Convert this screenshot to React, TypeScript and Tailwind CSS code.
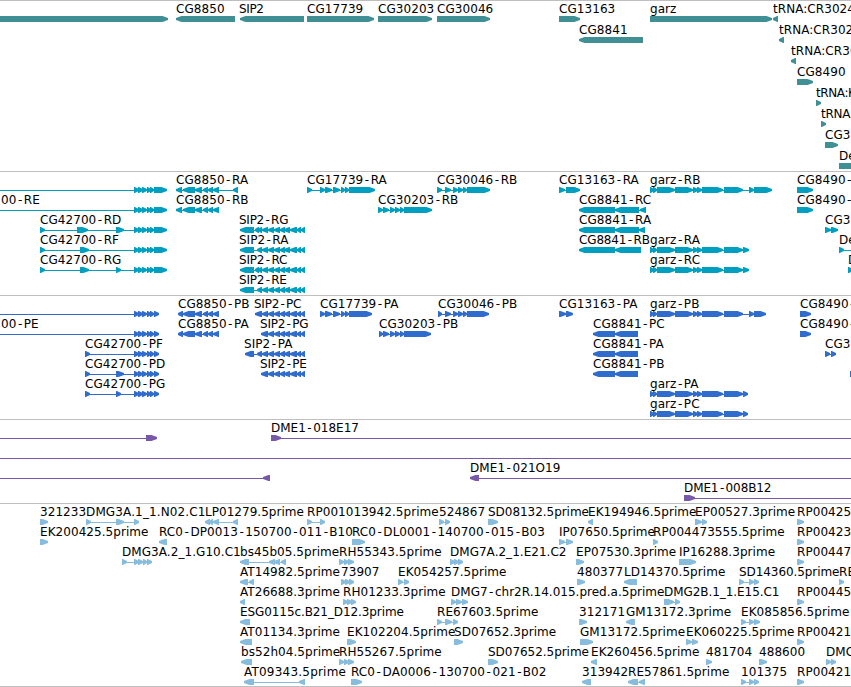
type Block = [start: number, end: number];

type Feature = {
  row: number;
  blocks: Block[];
  label?: string;
  // label edges, when they differ from the feature start and the font's own width
  labelX?: number;
  end?: number;
  reverse?: boolean;
  // connector extent for features that run past the visible region
  from?: number;
  to?: number;
};

type TrackData = {
  id: string;
  color: string;
  height: number;
  step: number;
  features: Feature[];
};

const WIDTH = 851;

const fwd = (row: number, label: string, blocks: Block[], extra: Partial<Feature> = {}): Feature => ({ row, label, blocks, ...extra });
const rev = (row: number, label: string, blocks: Block[], extra: Partial<Feature> = {}): Feature => ({ row, label, blocks, reverse: true, ...extra });

// Exon groups shared between isoforms
const CG42700_TAIL: Block[] = [[134, 139], [138, 143], [142, 147], [147, 151], [150, 154]];
const CG8850_TAIL: Block[] = [[183, 195], [195, 202], [203, 208], [208, 213], [213, 219]];
const SIP2_TAIL: Block[] = [[262, 268], [268, 274], [274, 280], [280, 285], [284, 290], [290, 297], [297, 301], [301, 305]];
const CG17739_MID: Block[] = [[320, 325], [325, 332], [333, 340], [341, 345], [345, 349]];
const CG30203_MID: Block[] = [[383, 389], [390, 395], [395, 400], [400, 404]];
const CG30046_MID: Block[] = [[445, 451], [453, 458], [458, 463], [463, 467]];
const GARZ: Block[] = [[650, 654], [653, 657], [657, 675], [675, 693], [693, 698], [697, 702], [702, 723], [724, 743]];

const TRACKS: TrackData[] = [
  {
    id: "genes",
    color: "#3f8f95",
    height: 170,
    step: 21,
    features: [
      fwd(0, "", [[-10, 168]]),
      rev(0, "CG8850", [[176, 235]]),
      rev(0, "SIP2", [[240, 304]], { labelX: 239, end: 264 }),
      fwd(0, "CG17739", [[307, 374]]),
      fwd(0, "CG30203", [[378, 432]]),
      fwd(0, "CG30046", [[437, 490]]),
      fwd(0, "CG13163", [[559, 580]]),
      fwd(0, "garz", [[650, 772]]),
      rev(0, "tRNA:CR30247", [[773, 778]]),
      rev(1, "CG8841", [[579, 643]]),
      rev(1, "tRNA:CR302", [[779, 784]]),
      rev(2, "tRNA:CR302", [[791, 796]]),
      fwd(3, "CG8490", [[797, 813]]),
      fwd(4, "tRNA:K", [[816, 821]], { end: 856 }),
      fwd(5, "tRNA:", [[821, 826]], { end: 854 }),
      fwd(6, "CG3", [[825, 838]]),
      fwd(7, "Den", [[839, 870]]),
    ],
  },
  {
    id: "transcripts",
    color: "#009fc0",
    height: 123,
    step: 20,
    features: [
      fwd(0, "", [...CG42700_TAIL, [154, 167]], { from: -5 }),
      rev(0, "CG8850-RA", [[176, 182], ...CG8850_TAIL, [233, 238]]),
      fwd(0, "CG17739-RA", [[307, 312], ...CG17739_MID, [349, 375]]),
      fwd(0, "CG30046-RB", [[437, 442], ...CG30046_MID, [467, 490]]),
      fwd(0, "CG13163-RA", [[559, 565], [566, 580]]),
      fwd(0, "garz-RB", [...GARZ, [749, 754], [754, 772]]),
      fwd(0, "CG8490-RA", [[797, 813]]),
      fwd(1, "00-RE", [...CG42700_TAIL, [154, 167]], { from: -5, labelX: 1 }),
      rev(1, "CG8850-RB", [[176, 182], ...CG8850_TAIL]),
      fwd(1, "CG30203-RB", [[378, 383], ...CG30203_MID, [404, 432]]),
      rev(1, "CG8841-RC", [[579, 615], [615, 639], [640, 646]]),
      fwd(1, "CG8490-RB", [[797, 813]]),
      fwd(2, "CG42700-RD", [[40, 45], [77, 88], [116, 124], ...CG42700_TAIL, [154, 167]]),
      rev(2, "SIP2-RG", [[240, 254], [255, 259], [258, 262], ...SIP2_TAIL], { labelX: 239, end: 288.5 }),
      rev(2, "CG8841-RA", [[579, 615], [615, 639], [639, 645]]),
      fwd(2, "CG3", [[825, 831], [831, 838]]),
      fwd(3, "CG42700-RF", [[40, 45], [80, 89], ...CG42700_TAIL, [154, 167]]),
      rev(3, "SIP2-RA", [[240, 254], [257, 262], ...SIP2_TAIL], { labelX: 239, end: 288.5 }),
      rev(3, "CG8841-RB", [[579, 615], [615, 641]], { end: 650 }),
      fwd(3, "garz-RA", [...GARZ, [743, 749]]),
      fwd(3, "Den", [[839, 844]], { to: 860 }),
      fwd(4, "CG42700-RG", [[40, 45], [80, 89], [116, 121], ...CG42700_TAIL, [154, 167]]),
      rev(4, "SIP2-RC", [[240, 254], [255, 259], [258, 262], ...SIP2_TAIL], { labelX: 239, end: 287.5 }),
      fwd(4, "garz-RC", [...GARZ, [743, 749]]),
      fwd(4, "D", [[848, 853]]),
      rev(5, "SIP2-RE", [[240, 254], [257, 262], ...SIP2_TAIL], { labelX: 239, end: 287 }),
    ],
  },
  {
    id: "proteins",
    color: "#306ccc",
    height: 123,
    step: 20,
    features: [
      fwd(0, "", [...CG42700_TAIL, [154, 159]], { from: -5 }),
      rev(0, "CG8850-PB", [[178, 183], ...CG8850_TAIL]),
      rev(0, "SIP2-PC", [[255, 262], ...SIP2_TAIL], { labelX: 254, end: 301.5 }),
      fwd(0, "CG17739-PA", [...CG17739_MID, [349, 372]]),
      fwd(0, "CG30046-PB", [[438, 442], ...CG30046_MID, [467, 489]]),
      fwd(0, "CG13163-PA", [[559, 566], [566, 573]]),
      fwd(0, "garz-PB", [...GARZ, [749, 754], [754, 766]]),
      fwd(0, "CG8490-PA", [[800, 811]]),
      fwd(1, "00-PE", [...CG42700_TAIL, [154, 159]], { from: -5, labelX: 1 }),
      rev(1, "CG8850-PA", [[178, 183], ...CG8850_TAIL]),
      rev(1, "SIP2-PG", [[261, 268], ...SIP2_TAIL.slice(1)], { labelX: 260, end: 308.5 }),
      fwd(1, "CG30203-PB", [[379, 383], ...CG30203_MID, [404, 431]]),
      rev(1, "CG8841-PC", [[593, 615], [615, 638]]),
      fwd(1, "CG8490-PB", [[800, 811]]),
      fwd(2, "CG42700-PF", [[85, 90], ...CG42700_TAIL, [154, 159]]),
      rev(2, "SIP2-PA", [[245, 254], [257, 262], ...SIP2_TAIL], { labelX: 244, end: 292.5 }),
      rev(2, "CG8841-PA", [[593, 615], [615, 638]]),
      fwd(2, "CG3", [[825, 830], [831, 836]]),
      fwd(3, "CG42700-PD", [[85, 90], [116, 124], ...CG42700_TAIL, [154, 159]]),
      rev(3, "SIP2-PE", [[261, 268], ...SIP2_TAIL.slice(1)], { labelX: 260, end: 307 }),
      rev(3, "CG8841-PB", [[593, 615], [615, 638]]),
      fwd(3, "", [[850, 870]]),
      fwd(4, "CG42700-PG", [[85, 90], [116, 121], ...CG42700_TAIL, [154, 159]]),
      fwd(4, "garz-PA", [...GARZ, [743, 748]]),
      fwd(5, "garz-PC", [...GARZ, [743, 748]]),
    ],
  },
  {
    id: "bacs",
    color: "#7858a8",
    height: 83,
    step: 20,
    features: [
      fwd(0, "", [[146, 157]], { from: -5 }),
      fwd(0, "DME1-018E17", [[271, 281]], { to: 860, end: 359 }),
      fwd(1, "", [], { from: -5, to: 860 }),
      rev(2, "", [[263, 270]], { from: -5 }),
      rev(2, "DME1-021O19", [[470, 479]], { to: 860, end: 560.5 }),
      fwd(3, "DME1-008B12", [[684, 695]], { to: 860, end: 771.5 }),
    ],
  },
  {
    id: "ests",
    color: "#87bcdc",
    height: 182,
    step: 20,
    features: [
      fwd(0, "321233", [[40, 48]]),
      fwd(0, "DMG3A.1_1.N02.C1", [[86, 91], [116, 124], [134, 139]], { end: 205.5 }),
      rev(0, "LP01279.5prime", [[205, 210], [209, 213], [213, 219], [233, 238]], { end: 304 }),
      fwd(0, "RP001013942.5prime", [[307, 312], [320, 325]]),
      fwd(0, "524867", [[439, 444], [445, 450]]),
      fwd(0, "SD08132.5prime", [[488, 498]], { end: 589 }),
      rev(0, "EK194946.5prime", [[588, 593]]),
      fwd(0, "EP00527.3prime", [[695, 702], [702, 707]]),
      fwd(0, "RP00425", [[797, 804]]),
      fwd(1, "EK200425.5prime", [[40, 48]]),
      rev(1, "RC0-DP0013-150700-011-B10", [[159, 167]], { end: 353 }),
      fwd(1, "RC0-DL0001-140700-015-B03", [[352, 365]]),
      fwd(1, "IP07650.5prime", [[559, 565], [566, 573]], { end: 655 }),
      fwd(1, "RP004473555.5prime", [[653, 658]]),
      fwd(1, "RP00423", [[797, 804]]),
      fwd(2, "DMG3A.2_1.G10.C1", [[122, 127], [134, 139], [138, 143], [143, 147], [147, 152]]),
      rev(2, "bs45b05.5prime", [[240, 249], [269, 275], [274, 280], [281, 286]]),
      fwd(2, "RH55343.5prime", [[339, 344], [344, 349], [348, 354]]),
      fwd(2, "DMG7A.2_1.E21.C2", [[450, 455], [454, 459], [458, 463]], { end: 566.5 }),
      fwd(2, "EP07530.3prime", [[576, 584]]),
      fwd(2, "IP16288.3prime", [[679, 696]]),
      fwd(2, "RP00447", [[797, 804]]),
      rev(3, "AT14982.5prime", [[240, 248], [249, 254]]),
      fwd(3, "73907", [[341, 346], [345, 350], [349, 354]]),
      fwd(3, "EK054257.5prime", [[398, 403], [404, 409]]),
      fwd(3, "480377", [[577, 585]]),
      rev(3, "LD14370.5prime", [[624, 637]]),
      fwd(3, "SD14360.5prime", [[739, 744], [749, 754], [754, 759]], { end: 839.5 }),
      fwd(3, "RE", [[839, 844]]),
      rev(4, "AT26688.3prime", [[240, 245]]),
      fwd(4, "RH01233.3prime", [[343, 348], [347, 352], [351, 356]]),
      fwd(4, "DMG7-chr2R.14.015.pred.a.5prime", [[451, 456], [456, 462], [462, 468]], { end: 664.5 }),
      fwd(4, "DMG2B.1_1.E15.C1", [[664, 674], [675, 680]], { end: 779.5 }),
      fwd(4, "RP00445", [[797, 804]]),
      rev(5, "ESG0115c.B21_D12.3prime", [[240, 250]], { end: 404 }),
      fwd(5, "RE67603.5prime", [[437, 442], [445, 452], [453, 458]]),
      fwd(5, "312171", [[579, 587]]),
      rev(5, "GM13172.3prime", [[626, 635]]),
      fwd(5, "EK085856.5prime", [[741, 746], [749, 754], [754, 760]]),
      rev(6, "AT01134.3prime", [[240, 252]]),
      fwd(6, "EK102204.5prime", [[347, 356]]),
      fwd(6, "SD07652.3prime", [[454, 463]]),
      fwd(6, "GM13172.5prime", [[580, 593]]),
      fwd(6, "EK060225.5prime", [[686, 692], [692, 698]]),
      fwd(6, "RP00421", [[797, 804]]),
      rev(7, "bs52h04.5prime", [[241, 252]]),
      fwd(7, "RH55267.5prime", [[339, 344], [344, 349], [348, 354]]),
      fwd(7, "SD07652.5prime", [[488, 498]], { end: 589 }),
      rev(7, "EK260456.5prime", [[591, 597]]),
      fwd(7, "481704", [[706, 712]]),
      fwd(7, "488600", [[759, 767]]),
      fwd(7, "DMC", [[826, 831], [831, 836]]),
      rev(8, "AT09343.5prime", [[244, 254], [299, 305]], { end: 346 }),
      fwd(8, "RC0-DA0006-130700-021-B02", [[351, 362]], { end: 546.5 }),
      rev(8, "313942", [[582, 591]]),
      rev(8, "RE57861.5prime", [[628, 638], [639, 645]]),
      fwd(8, "101375", [[741, 746], [749, 754], [754, 759]]),
      fwd(8, "RP00421", [[797, 804]]),
    ],
  },
];

// Arrow-shaped exon with a slightly blunt tip, six pixels tall
function blockPoints([a, b]: Block, top: number, reverse?: boolean) {
  const head = Math.min(5.5, b - a - 0.8);
  const mid = top + 3;
  const bottom = top + 6;
  return reverse
    ? `${b},${top} ${a + head},${top} ${a},${mid - 0.9} ${a},${mid + 0.9} ${a + head},${bottom} ${b},${bottom}`
    : `${a},${top} ${b - head},${top} ${b},${mid - 0.9} ${b},${mid + 0.9} ${b - head},${bottom} ${a},${bottom}`;
}

function Label({ text, x, y, end }: { text: string; x: number; y: number; end?: number }) {
  // Hyphens get a little air on both sides
  const parts = text.split(/(-)/);
  return (
    <text fill="#000" textLength={end ? end - x : undefined} x={x} y={y}>
      {parts.map((part, i) => (
        <tspan dx={i === 0 ? 0 : 1.5} key={i}>{part}</tspan>
      ))}
    </text>
  );
}

function FeatureGlyph({ feature, step, color }: { feature: Feature; step: number; color: string }) {
  const { row, blocks, label, labelX, reverse, end } = feature;
  const top = 15 + row * step;
  const from = feature.from ?? blocks[0][0];
  const to = feature.to ?? blocks[blocks.length - 1][1];
  return (
    <g>
      {label && <Label end={end} text={label} x={labelX ?? from} y={12 + row * step} />}
      <rect fill={color} height={1} width={to - from} x={from} y={top + 3} />
      {blocks.map((block) => (
        <polygon fill={color} key={block[0]} points={blockPoints(block, top, reverse)} />
      ))}
    </g>
  );
}

function Track({ track }: { track: TrackData }) {
  return (
    <section className="border-t border-[#bebebe]">
      <svg
        className="block overflow-hidden font-['DejaVu_Sans',sans-serif] text-[12px] tracking-[0.06px]"
        height={track.height}
        viewBox={`0 0 ${WIDTH} ${track.height}`}
        width={WIDTH}
      >
        {track.features.map((feature, i) => (
          <FeatureGlyph color={track.color} feature={feature} key={i} step={track.step} />
        ))}
      </svg>
    </section>
  );
}

export default function App() {
  return (
    <main className="flex w-[851px] flex-col overflow-hidden border-b border-[#bebebe] bg-white">
      {TRACKS.map((track) => (
        <Track key={track.id} track={track} />
      ))}
    </main>
  );
}
